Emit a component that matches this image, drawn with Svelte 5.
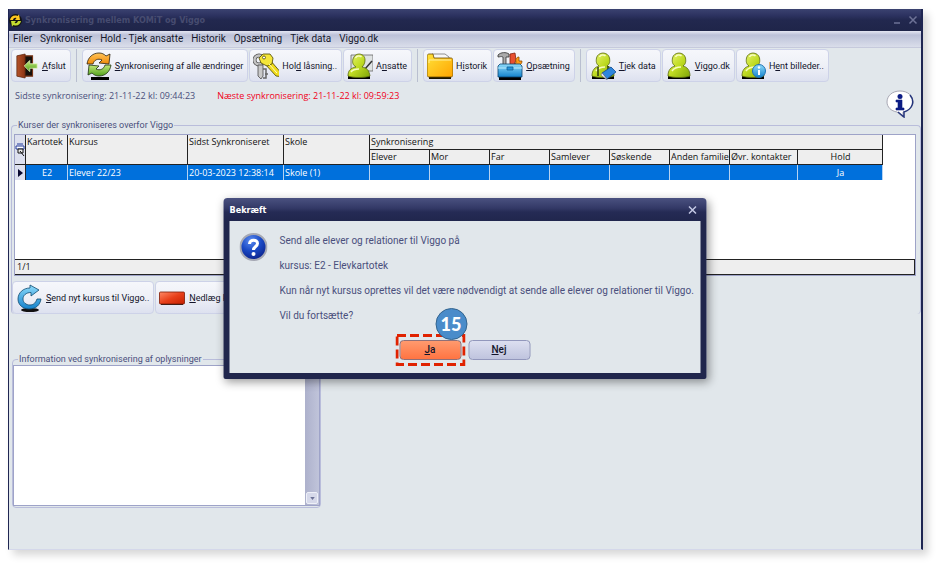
<script>
  const menu = ['Filer', 'Synkroniser', 'Hold - Tjek ansatte', 'Historik', 'Opsætning', 'Tjek data', 'Viggo.dk'];

  const toolGroups = [
    [{ icon: 'exit', label: ['', 'A', 'fslut'] }],
    [
      { icon: 'sync', label: ['', 'S', 'ynkronisering af alle ændringer'] },
      { icon: 'keys', label: ['Hol', 'd', ' låsning..'] },
      { icon: 'teacher', label: ['A', 'n', 'satte'] }
    ],
    [
      { icon: 'folder', label: ['H', 'i', 'storik'] },
      { icon: 'tools', label: ['', 'O', 'psætning'] }
    ],
    [
      { icon: 'book', label: ['', 'T', 'jek data'] },
      { icon: 'person', label: ['', 'V', 'iggo.dk'] },
      { icon: 'personInfo', label: ['H', 'e', 'nt billeder..'] }
    ]
  ];

  const courseTools = [
    { icon: 'refresh', label: ['', 'S', 'end nyt kursus til Viggo..'] },
    { icon: 'red', label: ['', 'N', 'edlæg kursus i Viggo..'] }
  ];

  const syncColumns = ['Elever', 'Mor', 'Far', 'Samlever', 'Søskende', 'Anden familie', 'Øvr. kontakter', 'Hold'];
  const columnWidths = [11, 42, 120, 96, 86, 60, 60, 60, 60, 60, 60, 68, 85];

  let log = $state('');
</script>

<svg class="defs" width="0" height="0" aria-hidden="true">
  <defs>
    <linearGradient id="green" x1="0" y1="0" x2="1" y2="1">
      <stop offset="0" stop-color="#ecf77a" /><stop offset=".5" stop-color="#bfdb22" /><stop offset="1" stop-color="#7da408" />
    </linearGradient>
    <linearGradient id="orange" x1="0" y1="0" x2="0" y2="1">
      <stop offset="0" stop-color="#ffc45a" /><stop offset="1" stop-color="#f08a08" />
    </linearGradient>
    <linearGradient id="leaf" x1="0" y1="0" x2="0" y2="1">
      <stop offset="0" stop-color="#c4ea7a" /><stop offset="1" stop-color="#4fa01c" />
    </linearGradient>
    <linearGradient id="yellow" x1="0" y1="0" x2="1" y2="1">
      <stop offset="0" stop-color="#ffe23a" /><stop offset="1" stop-color="#ffa400" />
    </linearGradient>
    <linearGradient id="blue" x1="0" y1="0" x2="0" y2="1">
      <stop offset="0" stop-color="#8fdcfb" /><stop offset="1" stop-color="#1482cc" />
    </linearGradient>
    <linearGradient id="brown" x1="0" y1="0" x2="1" y2="0">
      <stop offset="0" stop-color="#b5532a" /><stop offset="1" stop-color="#8a3212" />
    </linearGradient>
    <linearGradient id="redFill" x1="0" y1="0" x2="1" y2="1">
      <stop offset="0" stop-color="#ff8a66" /><stop offset=".5" stop-color="#e8401a" /><stop offset="1" stop-color="#c52000" />
    </linearGradient>
    <radialGradient id="ball" cx=".4" cy=".25" r=".8">
      <stop offset="0" stop-color="#5b8cf0" /><stop offset=".5" stop-color="#1a49c4" /><stop offset="1" stop-color="#0a1f86" />
    </radialGradient>
  </defs>
</svg>

{#snippet syncArrows()}
  <path d="M1 12C2 5 7 1 13 1c3 0 5 1 7 3l4-2-1 10-10-1 3-3c-4-2-8 0-9 4z" fill="url(#orange)" stroke="#2b2210" stroke-width=".8" />
  <path d="M25 13c-1 7-6 11-12 11-3 0-5-1-7-3l-4 2 1-10 10 1-3 3c4 2 8 0 9-4z" fill="url(#leaf)" stroke="#1e3010" stroke-width=".8" />
{/snippet}

{#snippet body()}
  <rect x="2" y="24" width="22" height="3" fill="#000" />
  <path d="M2 24c0-6 3-9 7-10C6 12 6 9 6.500 6 7 3 10 1 13 1s6 2 6.500 5c.5 3 .5 6-2.500 8 4 1 7 4 7 10-5 2-17 2-22 0z" fill="url(#green)" stroke="#5a6a10" stroke-width=".8" />
  <path d="M9.500 5c1-2 4-3 6-1M6 19c2-3 5-4 9-4" fill="none" stroke="#f7fcc0" stroke-width="1.500" />
{/snippet}

{#snippet icon(name)}
  <svg class="icon" class:slim={name === 'exit'} viewBox="0 0 26 28" aria-hidden="true">
    {#if name === 'exit'}
      <path d="M10 3h9v22h-9z" fill="#16100c" stroke="#7a3516" stroke-width="1.200" />
      <path d="M2 3l9-2v26l-9-2z" fill="url(#brown)" stroke="#5e260e" stroke-width=".8" />
      <path d="M10 14l6-6v3.500h8v5h-8V20z" fill="url(#leaf)" stroke="#e6f7c0" stroke-width=".8" />
    {:else if name === 'sync'}
      <rect x="5" y="25" width="18" height="3" fill="#000" />
      {@render syncArrows()}
    {:else if name === 'keys'}
      <circle cx="6" cy="8" r="4.500" fill="none" stroke="#555" stroke-width="4" />
      <circle cx="6" cy="8" r="4.500" fill="none" stroke="#c4c4c4" stroke-width="2.500" />
      <path d="M5 13v11l3 3 2-3V13z" fill="#c9c9c9" stroke="#4c4c4c" stroke-width=".8" />
      <path d="M10 17h3v9h-3m2-4h3" fill="none" stroke="#666" stroke-width="1.500" />
      <path d="M12 12l11 12 4 .5-.5-5.500L17 8z" fill="#f0dc1c" stroke="#4c4600" stroke-width=".8" />
      <path d="M6 6l4-4h7l3 4-1 6-5 2-6-3z" fill="#f4e63a" stroke="#4c4600" stroke-width=".8" />
      <circle cx="11" cy="5.500" r="1.500" fill="#fff" stroke="#4c4600" stroke-width=".8" />
      <path d="M16 12l8 9" stroke="#fffac0" />
    {:else if name === 'teacher'}
      <path d="M4 3h22v16H4z" fill="#dfe3e3" stroke="#666" stroke-width=".8" />
      <path d="M25 9l-7 8" stroke="#333" stroke-width="1.500" />
      <rect x="1" y="24" width="22" height="3" fill="#000" />
      <path d="M1 24c0-6 3-8 8-9-3-2-4-4-3-8 1-3 3-5 6-5s6 2 6 6c0 3-1 5-3 7 5 1 7 3 8 9-5 2-17 2-22 0z" fill="url(#green)" stroke="#5a6a10" stroke-width=".8" />
      <path d="M8.500 6c1-2 4-3 6-1M4 20c2-3 5-3 8-3" fill="none" stroke="#f7fcc0" stroke-width="1.500" />
    {:else if name === 'folder'}
      <rect x="2" y="25" width="22" height="2" fill="#1a1300" />
      <path d="M5 9V2h13l4 3v4z" fill="#f7f7f7" stroke="#777" stroke-width=".8" />
      <path d="M0 4c0-1 1-2 2-2h4l1 4h17c1 0 2 1 2 2v15c0 1-1 2-2 2H2c-1 0-2-1-2-2z" fill="url(#yellow)" stroke="#6d4d00" stroke-width=".8" />
      <path d="M2 11V8h22" fill="none" stroke="#fff09a" />
    {:else if name === 'tools'}
      <path d="M1 3c3-3 8-3 11-1v3H9v10H6V5C4 4 3 5 1 5z" fill="#aaa" stroke="#333" stroke-width=".8" />
      <path d="M13 2l5-1 1 7-3 7h-3z" fill="#e85030" stroke="#81200c" stroke-width=".8" />
      <path d="M17 16l2-6c-1-3 1-5 3-5v4l3 0c0 3-2 4-4 4l-1 4z" fill="#ff9a14" stroke="#8c4c00" stroke-width=".8" />
      <rect x="2" y="25" width="22" height="3" fill="#000" />
      <path d="M1 14l2-2h20l2 2v11H1z" fill="url(#blue)" stroke="#0c4470" stroke-width=".8" />
      <path d="M1 16h24" stroke="#bdeeff" /><path d="M10 15h6v3h-6z" fill="#2597dc" stroke="#0f5e98" stroke-width=".8" />
    {:else if name === 'book'}
      {@render body()}
      <path d="M8 15v9M18 14v5" stroke="#2e3a10" stroke-width="1.500" />
      <path d="M12 21l9-6 5 5-9 7z" fill="#2e86dc" stroke="#124a90" stroke-width=".8" />
      <path d="M12 21l5 6v1l-6-5z" fill="#fff" stroke="#667" stroke-width=".6" />
    {:else if name === 'person'}
      {@render body()}
    {:else if name === 'personInfo'}
      {@render body()}
      <circle cx="19" cy="19" r="6.500" fill="url(#blue)" stroke="#1d71b4" />
      <path d="M19 18v5" stroke="#fff" stroke-width="2" /><circle cx="19" cy="15.500" r="1.200" fill="#fff" />
    {:else if name === 'refresh'}
      <ellipse cx="14" cy="26" rx="9" ry="2" fill="#111" />
      <path d="M14 1l9 5-8 6V8.500c-5 0-8 3-8 6.500s3 6 7 6 6-3 7-6h4c-1 6-5 10-12 10-6 0-11-4-11-10C2 9 7 4 14 4z" fill="url(#blue)" stroke="#0e4a70" stroke-width=".8" />
    {:else if name === 'red'}
      <rect x="2" y="19" width="22" height="2" fill="#222" />
      <rect x=".5" y="8" width="25" height="12" rx="1" fill="url(#redFill)" stroke="#7c1a06" stroke-width=".8" />
    {/if}
  </svg>
{/snippet}

{#snippet tool(item)}
  <button type="button" class="tool">
    {@render icon(item.icon)}
    <span>{item.label[0]}<u>{item.label[1]}</u>{item.label[2]}</span>
  </button>
{/snippet}

<main class="window">
  <header class="titlebar">
    <svg class="app-icon" viewBox="0 0 26 26" aria-hidden="true">
      <circle cx="13" cy="13" r="13" fill="#141414" />
      <path d="M2 12C3 5 10 1 17 4l3-3 2 11-10 0 3-4c-4-1-6 1-7 4z" fill="#ffc820" />
      <path d="M24 14c-1 7-8 11-15 8l-3 3-2-11 10 0-3 4c4 1 6-1 7-4z" fill="#c4dc30" />
    </svg>
    <h1>Synkronisering mellem KOMiT og Viggo</h1>
    <button type="button" class="caption" aria-label="Minimer">
      <svg viewBox="0 0 10 10"><path d="M2 8h6" stroke="currentColor" stroke-width="1.500" /></svg>
    </button>
    <button type="button" class="caption" aria-label="Luk">
      <svg viewBox="0 0 10 10"><path d="M1.500 1.500l7 7m0-7l-7 7" stroke="currentColor" stroke-width="1.500" /></svg>
    </button>
  </header>

  <nav class="menu">
    {#each menu as item}<button type="button">{item}</button>{/each}
  </nav>

  <div class="toolbar">
    {#each toolGroups as group}
      <div class="group">
        {#each group as item}{@render tool(item)}{/each}
      </div>
    {/each}
  </div>

  <div class="status">
    <p>Sidste synkronisering: 21-11-22 kl: 09:44:23</p>
    <p class="next">Næste synkronisering: 21-11-22 kl: 09:59:23</p>
    <button type="button" class="info" aria-label="Information">
      <svg viewBox="0 0 28 28">
        <path d="M14 1C6 1 1 6 1 12c0 5 4 9 10 10l6 5v-5c6-1 10-5 10-10C27 6 22 1 14 1z" fill="#fff" stroke="#a8a8b4" />
        <path d="M24 5c5 6 3 14-6 17v5l-6-5" fill="none" stroke="#24357c" stroke-width="1.500" />
        <circle cx="14" cy="6.500" r="2.500" fill="#0c1c84" />
        <path d="M10 10h6v8h2v2h-8v-2h2v-6h-2z" fill="#0c1c84" stroke="#0c1c84" stroke-width=".6" />
      </svg>
    </button>
  </div>

  <fieldset class="courses">
    <legend>Kurser der synkroniseres overfor Viggo</legend>
    <div class="grid">
      <table>
        <colgroup>
          {#each columnWidths as w}<col style="width: {w}px" />{/each}
        </colgroup>
        <thead>
          <tr>
            <th rowspan="2" class="marker" aria-label="Kolonner">
              <svg viewBox="0 0 10 14"><path d="M2 1h6M1 3h8v3H1z" fill="#fff" stroke="#223a9c" /><path d="M3 6h5v4H3zM5 8l4 5" fill="#eee" stroke="#111" /></svg>
            </th>
            <th rowspan="2">Kartotek</th>
            <th rowspan="2">Kursus</th>
            <th rowspan="2">Sidst Synkroniseret</th>
            <th rowspan="2">Skole</th>
            <th colspan="8">Synkronisering</th>
          </tr>
          <tr>
            {#each syncColumns as name}<th class:mid={name === 'Hold'}>{name}</th>{/each}
          </tr>
        </thead>
        <tbody>
          <tr>
            <td class="marker"><svg viewBox="0 0 10 14"><path d="M3 3l5 4-5 4z" fill="#0a0a30" /></svg></td>
            <td class="mid">E2</td>
            <td>Elever 22/23</td>
            <td>20-03-2023 12:38:14</td>
            <td>Skole (1)</td>
            <td></td><td></td><td></td><td></td><td></td><td></td><td></td>
            <td class="mid">Ja</td>
          </tr>
        </tbody>
      </table>
      <div class="count">1/1</div>
    </div>
    <div class="group">
      {#each courseTools as item}{@render tool(item)}{/each}
    </div>
  </fieldset>

  <fieldset class="log">
    <legend>Information ved synkronisering af oplysninger</legend>
    <div class="log-box">
      <textarea aria-label="Information ved synkronisering af oplysninger" bind:value={log}></textarea>
      <div class="scroll">
        <button type="button" aria-label="Op"><svg viewBox="0 0 6 4"><path d="M0 4h6L3 0z" fill="#6c7296" /></svg></button>
        <button type="button" aria-label="Ned"><svg viewBox="0 0 6 4"><path d="M0 0h6L3 4z" fill="#6c7296" /></svg></button>
      </div>
    </div>
  </fieldset>

  <div class="dialog" role="dialog" aria-labelledby="dialog-title">
    <header>
      <h2 id="dialog-title">Bekræft</h2>
      <button type="button" class="caption" aria-label="Luk">
        <svg viewBox="0 0 10 10"><path d="M1.500 1.500l7 7m0-7l-7 7" stroke="currentColor" stroke-width="1.500" /></svg>
      </button>
    </header>
    <div class="dialog-body">
      <div class="message">
        <svg class="question" viewBox="0 0 28 28" aria-hidden="true">
          <circle cx="14" cy="14" r="13" fill="url(#ball)" stroke="#a6a9b4" stroke-width="2" />
          <path d="M10 11c0-5 8-5 8-.5 0 3-4 3-4 6.500" fill="none" stroke="#fff" stroke-width="3" />
          <circle cx="14" cy="21" r="2" fill="#fff" />
        </svg>
        <div>
          <p>Send alle elever og relationer til Viggo på</p>
          <p>kursus: E2 - Elevkartotek</p>
          <p>Kun når nyt kursus oprettes vil det være nødvendigt at sende alle elever og relationer til Viggo.</p>
          <p>Vil du fortsætte?</p>
        </div>
      </div>
      <div class="answers">
        <div class="target">
          <button type="button" class="yes"><u>J</u>a</button>
          <svg class="dashes" aria-hidden="true"><rect x="1.500" y="1.500" /></svg>
          <span class="step">15</span>
        </div>
        <button type="button"><u>N</u>ej</button>
      </div>
    </div>
  </div>
</main>

<style>
  :global(body) { margin: 0; background: #fff; }
  .defs { position: absolute; }
  .window {
    position: relative;
    margin: 9px 17px 19px 8px;
    padding-bottom: 41px;
    border-left: 1px solid #1f2652;
    border-right: 2px solid #1f2652;
    border-bottom: 1px solid #d4d8ea;
    background: #e1e7eb;
    box-shadow: 5px 5px 8px rgba(0, 0, 0, .16);
    font: 9px/12px "Open Sans", "Noto Sans", sans-serif;
    color: #4a4f7c;
  }
  button { font: inherit; color: inherit; padding: 0; border: 0; background: none; }
  p, h1, h2 { margin: 0; }
  u { text-decoration-skip-ink: none; }
  .titlebar {
    display: flex;
    align-items: center;
    height: 22px;
    background: linear-gradient(#3b4270 0, #2c3260 30%, #22284f 50%, #1f2549);
  }
  .app-icon { width: 13px; height: 13px; }
  h1 { flex: 1; padding-left: 3px; font: bold 9px/12px "DejaVu Sans Condensed", "DejaVu Sans", sans-serif; color: #474c70; }
  h2 { flex: 1; font: bold 9px/12px "DejaVu Sans Condensed", "DejaVu Sans", sans-serif; color: #fff; }
  .caption { display: flex; width: 16px; justify-content: center; color: #6d7296; }
  .caption svg { width: 10px; height: 10px; }
  .menu {
    display: flex;
    gap: 8px;
    height: 16px;
    padding: 0 4px;
    background: linear-gradient(#e4e6f2, #bcc1d8 25%, #dadeea);
    border-bottom: 1px solid #c6cadc;
    font: 10px/16px Roboto, sans-serif;
    color: #16182c;
  }
  .toolbar { display: flex; height: 35px; align-items: center; padding-left: 2px; }
  .group { display: flex; gap: 1px; }
  .toolbar .group + .group { margin-left: 5px; padding-left: 5px; border-left: 1px solid #b9bfd0; }
  .tool {
    display: flex;
    align-items: center;
    gap: 4px;
    height: 33px;
    padding: 0 4px 0 3px;
    border: 1px solid #cdd2e8;
    border-radius: 4px;
    background: linear-gradient(#f6f7fb, #eef0f7 50%, #dde1ef);
    font-family: Roboto, sans-serif;
    color: #12142a;
    white-space: nowrap;
  }
  .toolbar .tool { gap: 3px; }
  .icon { width: 26px; height: 28px; flex: none; }
  .icon.slim { width: 24px; }
  .status { display: flex; height: 36px; padding: 0 7px 0 6px; }
  .status p { padding-top: 7px; }
  .status .next { flex: 1; padding-left: 22px; color: #f00020; }
  .info { padding-top: 5px; }
  .info svg { width: 28px; height: 28px; display: block; }
  fieldset { min-width: 0; margin: 0; border: 1px solid #b9bddb; border-radius: 4px; }
  legend { padding: 0 1px; margin-left: 5px; font-family: Roboto, sans-serif; }
  .courses { margin: 0 0 0 2px; padding: 3px 0 0; border-bottom: 0; }
  .grid {
    display: flex;
    flex-direction: column;
    justify-content: space-between;
    min-height: 140px;
    margin: 0 4px 5px 2px;
    border: 1px solid #9ea3c8;
    background: #fff;
    color: #111;
  }
  table { table-layout: fixed; width: 868px; border-collapse: separate; border-spacing: 0; }
  th, td { height: 15px; padding: 0 0 0 1px; text-align: left; font-weight: normal; line-height: 15px; white-space: nowrap; overflow: hidden; box-sizing: border-box; }
  th { vertical-align: top; background: #eee; border-right: 1px solid #222; border-bottom: 1px solid #222; line-height: 14px; }
  td { background: #0070dc; color: #fff; border-right: 1px solid #b5d2f2; }
  .mid { text-align: center; }
  .marker { padding: 0; vertical-align: middle; background: #dde0ee; border-right: 1px solid #222; }
  .marker svg { display: block; width: 10px; height: 14px; }
  .count { padding-left: 2px; background: #eee; border: solid #222; border-width: 1px 1px 1px 0; line-height: 14px; }
  .log { width: 307px; margin: 39px 0 0 3px; padding: 0; }
  .log-box { display: flex; height: 139px; border: 1px solid #9ea3c8; margin-bottom: 1px; }
  textarea { flex: 1; min-width: 0; padding: 2px; border: 0; resize: none; background: #fff; font: inherit; }
  .scroll { display: flex; flex-direction: column; justify-content: space-between; width: 14px; padding: 1px; box-sizing: border-box; background: linear-gradient(90deg, #adb1cc, #c0c4da); }
  .scroll button { display: flex; align-items: center; justify-content: center; height: 12px; border: 1px solid #eef0f8; border-radius: 2px; background: #d6d9ea; }
  .scroll svg { width: 5px; height: 3px; }
  .dialog {
    position: absolute;
    top: 189px;
    left: 50%;
    width: 483px;
    transform: translateX(-50%);
    box-sizing: border-box;
    padding: 0 6px 6px;
    border-radius: 4px 4px 2px 2px;
    background: linear-gradient(#4a5180 0, #333967 10px, #252b55 14px, #20264c 24px, #20264c);
    box-shadow: 2px 3px 10px rgba(0, 0, 0, .4);
  }
  .dialog header { display: flex; align-items: center; height: 23px; }
  .dialog .caption { color: #c3c8e4; }
  .dialog-body { display: flex; flex-direction: column; height: 152px; background: #e1e7eb; }
  .message { display: flex; flex: 1; gap: 12px; padding: 7px 0 0 10px; }
  .question { width: 28px; height: 28px; margin-top: 5px; flex: none; }
  .message p { font: 10px/25px Roboto, sans-serif; white-space: nowrap; }
  .answers { display: flex; justify-content: center; align-items: center; gap: 3px; padding: 0 5px 7px 0; }
  .answers button { width: 62px; height: 20px; border: 1px solid #9297bc; border-radius: 4px; background: linear-gradient(#dcdff0, #bfc4de); font: 500 10px/12px Roboto, sans-serif; color: #12142a; }
  .answers .yes { border-color: #8f7078; background: linear-gradient(#ff9a6e, #ff7442); }
  .target { position: relative; padding: 6px 4px; }
  .dashes { position: absolute; inset: 0; width: 100%; height: 100%; pointer-events: none; }
  .dashes rect { width: calc(100% - 3px); height: calc(100% - 3px); fill: none; stroke: #e02200; stroke-width: 3px; stroke-dasharray: 9px 4px; }
  .step {
    position: absolute;
    top: -26px;
    right: -2px;
    width: 30px;
    height: 30px;
    border: 1px solid #34658f;
    border-radius: 50%;
    background: #4a8cca;
    font: 900 18px/30px Lato, sans-serif;
    text-align: center;
    color: #fff;
  }
</style>
